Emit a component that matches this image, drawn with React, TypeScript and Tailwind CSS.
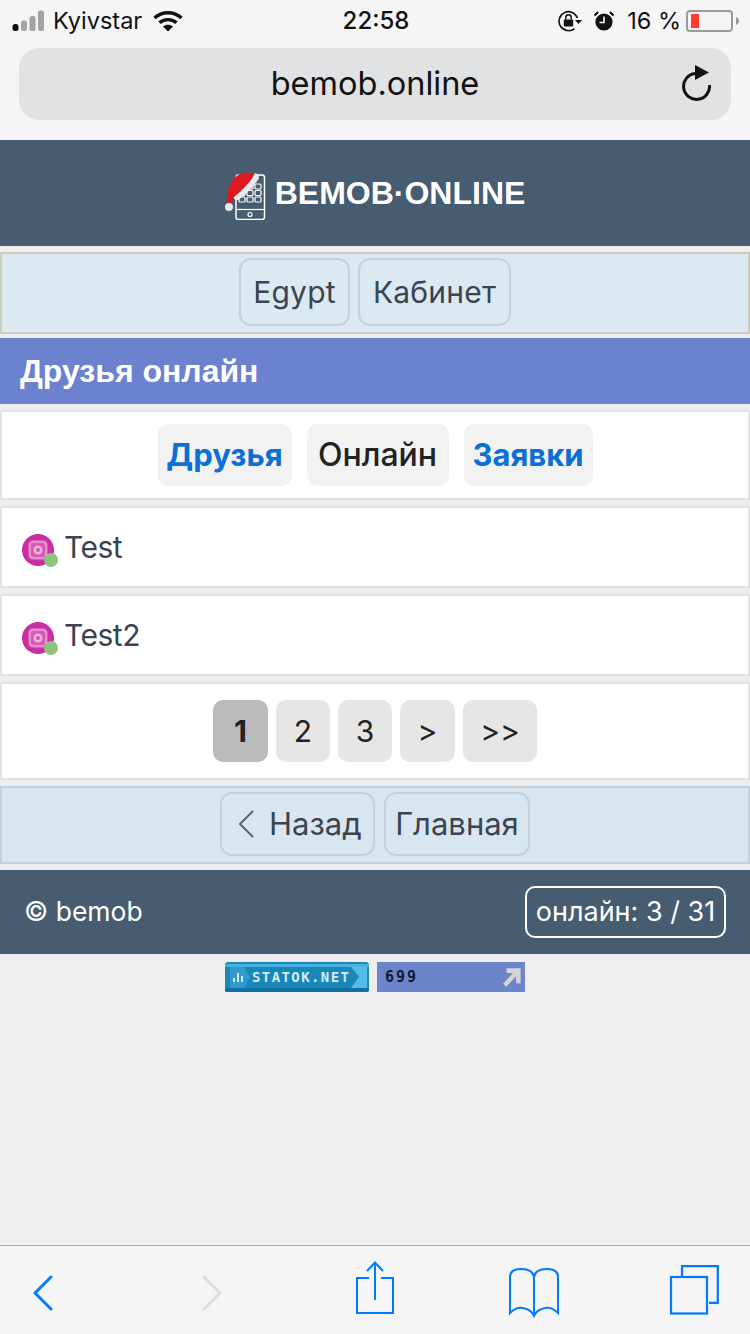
import type { ReactNode } from 'react'

const sans = "font-['Liberation_Sans',Arial,sans-serif]"
const ios = "font-['Inter','Liberation_Sans',sans-serif]"

function SignalIcon() {
  return (
    <svg width="34" height="22" viewBox="0 0 34 22">
      <rect x="0.5" y="14" width="6" height="7" rx="2.5" fill="#111" />
      <rect x="9" y="10.5" width="6" height="10.5" rx="2.5" fill="#a3a3a3" />
      <rect x="17.5" y="6" width="6" height="15" rx="2.5" fill="#a3a3a3" />
      <rect x="26" y="0.5" width="6" height="20.5" rx="2.5" fill="#a3a3a3" />
    </svg>
  )
}

function WifiIcon() {
  return (
    <svg width="30" height="22" viewBox="0 0 30 22" fill="none" stroke="#111" strokeWidth="3.4">
      <path d="M1.5 8 C9 1 21 1 28.5 8" />
      <path d="M6.5 12.8 C11 8.6 19 8.6 23.5 12.8" />
      <path d="M15 21.5 L10 16.4 C13 14.2 17 14.2 20 16.4 Z" fill="#111" stroke="none" />
    </svg>
  )
}

function RotationLockIcon() {
  return (
    <svg width="24" height="22" viewBox="0 0 24 22" fill="none">
      <path d="M19.5 8 A9.5 9.5 0 1 0 16.5 18.6" stroke="#111" strokeWidth="1.6" />
      <path d="M17 10 H24 L20.5 14 Z" fill="#111" />
      <rect x="5.8" y="9.5" width="9.4" height="7" rx="1" fill="#111" />
      <path d="M7.8 9.5 V7.5 A2.7 2.7 0 0 1 13.2 7.5 V9.5" stroke="#111" strokeWidth="1.5" />
    </svg>
  )
}

function AlarmIcon() {
  return (
    <svg width="20" height="20" viewBox="0 0 20 20">
      <circle cx="10" cy="11" r="8.6" fill="#111" />
      <path d="M10 5.5 V11.5 H5.5" stroke="#f5f5f5" strokeWidth="1.6" fill="none" />
      <path d="M0.5 4.5 L4 1 M19.5 4.5 L16 1" stroke="#111" strokeWidth="2.2" />
    </svg>
  )
}

function BatteryIcon() {
  return (
    <div className="flex items-center gap-[3px]">
      <div className="flex h-[22px] w-[47px] items-center rounded-[4px] border-2 border-[#9a9a9a] pl-[3px]">
        <div className="h-[14px] w-[8px] bg-[#ff3b30]" />
      </div>
      <svg width="3" height="8" viewBox="0 0 3 8">
        <path d="M0 0 C2 1 3 2.5 3 4 C3 5.5 2 7 0 8 Z" fill="#9a9a9a" />
      </svg>
    </div>
  )
}

function ReloadIcon() {
  return (
    <svg width="32" height="36" viewBox="0 0 32 36" fill="none">
      <path d="M14 8.5 A13 13 0 1 0 28.5 20" stroke="#111" strokeWidth="3" />
      <path d="M14 0 L28 7.5 L14 15 Z" fill="#111" />
    </svg>
  )
}

// santa hat over a small phone outline
function LogoIcon() {
  return (
    <svg width="42" height="50" viewBox="0 0 42 50" fill="none">
      <rect x="12" y="5" width="28.5" height="44.5" rx="2.5" stroke="#fff" strokeWidth="1.5" />
      <path d="M12 39.5 H40" stroke="#fff" strokeWidth="1.2" />
      <circle cx="26" cy="44.5" r="2" stroke="#fff" strokeWidth="1.2" />
      {[14, 20.5, 27].map(y =>
        [15, 23, 31].map(x => (
          <rect key={`${x}-${y}`} x={x} y={y} width="6" height="5" rx="1" stroke="#fff" strokeWidth="1.2" />
        ))
      )}
      <path d="M4 36 C2 24 5 11 14 5 C20 2 27 2 33 4 L14 24 C10 26 8 30 7 36 Z" fill="#dc1a1f" />
      <path d="M10 27 C18 21 27 12 31 3 C35 4 36 7 34 10 C29 17 22 24 15 29.5 C12 31 9 29 10 27 Z" fill="#e9ecec" />
      <circle cx="5" cy="37" r="4" fill="#e9ecec" />
    </svg>
  )
}

function Avatar() {
  return (
    <div className="relative h-[32px] w-[32px] shrink-0">
      <svg width="32" height="32" viewBox="0 0 32 32" fill="none">
        <circle cx="16" cy="16" r="16" fill="#c92fa3" />
        <rect x="6.5" y="6.5" width="19" height="19" rx="4.5" fill="#e58ccd" />
        <rect x="9" y="9" width="14" height="14" rx="3" fill="#d55ab8" />
        <circle cx="16" cy="16" r="4.5" fill="#eeb4dd" />
        <circle cx="16" cy="16" r="2" fill="#d354b4" />
      </svg>
      <div className="absolute left-[22px] top-[19px] h-[14px] w-[14px] rounded-full bg-[#8cc47c] blur-[0.5px]" />
    </div>
  )
}

function NavButton({ children, className = 'px-[12px]' }: { children: ReactNode; className?: string }) {
  return (
    <div className={`flex items-center justify-center rounded-[12px] border-2 border-[#c2d1dc] text-[#3b4350] ${className}`}>
      {children}
    </div>
  )
}

function PageButton({ label, width, active }: { label: string; width: string; active?: boolean }) {
  return (
    <div
      className={`flex h-[62px] items-center justify-center rounded-[10px] text-[30px] text-[#222] ${width} ${
        active ? 'bg-[#bbbbbb] font-bold' : 'bg-[#e6e6e6]'
      }`}
    >
      {label}
    </div>
  )
}

function FriendRow({ name }: { name: string }) {
  return (
    <div className="flex h-[82px] items-center gap-[10px] border-2 border-[#e2e2e2] bg-white pl-[20px] text-[30px] text-[#3b4350]">
      <div className="mt-[6px]">
        <Avatar />
      </div>
      <span className={`tracking-[-0.5px] ${ios}`}>{name}</span>
    </div>
  )
}

function BackIcon() {
  return (
    <svg width="20" height="36" viewBox="0 0 20 36" fill="none" stroke="#007aff" strokeWidth="3" strokeLinecap="round" strokeLinejoin="round">
      <path d="M18 2 L2 18 L18 34" />
    </svg>
  )
}

function ForwardIcon() {
  return (
    <svg width="20" height="36" viewBox="0 0 20 36" fill="none" stroke="#dcdcdc" strokeWidth="3" strokeLinecap="round" strokeLinejoin="round">
      <path d="M2 2 L18 18 L2 34" />
    </svg>
  )
}

function ShareIcon() {
  return (
    <svg width="38" height="54" viewBox="0 0 38 54" fill="none" stroke="#007aff" strokeWidth="2">
      <path d="M13 17 H1 V52 H37 V17 H25" />
      <path d="M19 39 V2" />
      <path d="M11 10 L19 1.5 L27 10" />
    </svg>
  )
}

function BookIcon() {
  return (
    <svg width="50" height="50" viewBox="0 0 50 50" fill="none" stroke="#007aff" strokeWidth="2">
      <path d="M25 9 C24 3 18 1 12 1 C5 1 1 4 1 9 V45 C6 40 10 39 14 40 C19 41 23 43 25 48 C27 43 31 41 36 40 C40 39 44 40 49 45 V9 C49 4 45 1 38 1 C32 1 26 3 25 9 V47" />
    </svg>
  )
}

function TabsIcon() {
  return (
    <svg width="50" height="50" viewBox="0 0 50 50" fill="none" stroke="#007aff" strokeWidth="2.2">
      <rect x="2" y="12" width="36" height="36.5" />
      <path d="M13 11 V1.2 H48.8 V37.8 H40" />
    </svg>
  )
}

// pixel style counter logo
function StatokBadge() {
  return (
    <svg width="144" height="30" viewBox="0 0 144 30">
      <rect width="144" height="30" rx="3" fill="#1b86b8" />
      <rect y="2" width="144" height="3" fill="#46b2de" />
      <rect y="26" width="144" height="4" rx="2" fill="#10709f" />
      <path d="M5 5 H19 L25 15 L19 26 H5 Z" fill="#2f9acb" />
      <path d="M126 5 H142 V26 H126 L134 15 Z" fill="#56bce6" />
      <path d="M8 20 V16 H10 V20 Z M12 20 V11 H14 V20 Z M16 20 V14 H18 V20 Z" fill="#cfeaf5" />
      <text x="27" y="20" fontFamily="DejaVu Sans Mono, monospace" fontSize="14" fontWeight="700" letterSpacing="1.4" fill="#d3edf7">
        STATOK.NET
      </text>
    </svg>
  )
}

export default function App() {
  return (
    <div className={`flex min-h-[1334px] flex-col bg-[#eeeeee] ${sans}`}>
      {/* browser chrome */}
      <div className={`h-[140px] bg-[#f5f5f5] ${ios}`}>
        <div className="grid h-[48px] grid-cols-3 items-center pb-[6px] text-[23.5px] text-[#111]">
          <div className="flex items-center pl-[12px]">
            <SignalIcon />
            <span className="ml-[7px] mr-[11px]">Kyivstar</span>
            <WifiIcon />
          </div>
          <div className="pl-[2px] text-center text-[24px] font-medium">22:58</div>
          <div className="flex items-center justify-end pr-[11px]">
            <RotationLockIcon />
            <div className="ml-[12px] mr-[13px]">
              <AlarmIcon />
            </div>
            <span className="mr-[5px]">16 %</span>
            <BatteryIcon />
          </div>
        </div>
        <div className="relative mx-[19px] flex h-[72px] items-center justify-center rounded-[20px] bg-[#e1e2e4] text-[32.5px] text-[#111]">
          bemob.online
          <div className="absolute right-[18px] top-[17px]">
            <ReloadIcon />
          </div>
        </div>
      </div>

      {/* site header */}
      <div className="flex h-[106px] items-center justify-center bg-[#475c70] pt-[4px] text-[32px] font-bold text-white">
        <LogoIcon />
        <span className="ml-[9px] mr-[1px] mt-[-4px]">BEMOB·ONLINE</span>
      </div>

      <div className={`mt-[6px] flex h-[82px] justify-center gap-[8px] border-2 border-[#c9ccbe] bg-[#dce9f1] pb-[6px] pt-[4px] text-[30px] tracking-[0.2px] ${ios}`}>
        <NavButton className="w-[111px]">Egypt</NavButton>
        <NavButton className="w-[153px]">Кабинет</NavButton>
      </div>

      <div className="mt-[4px] flex h-[66px] items-center bg-[#6c82cf] pl-[20px] text-[32px] font-bold text-white">
        Друзья онлайн
      </div>

      <div className={`mt-[6px] flex h-[90px] items-center justify-center gap-[15px] border-2 border-[#e2e2e2] bg-white text-[31px] font-bold ${ios}`}>
        <div className="flex h-[62px] w-[134px] items-center justify-center rounded-[10px] bg-[#f2f2f2] text-[#0a6fd6]">Друзья</div>
        <div className="flex h-[62px] w-[142px] items-center justify-center rounded-[10px] bg-[#f2f2f2] text-[32px] font-medium text-[#222]">Онлайн</div>
        <div className="flex h-[62px] w-[129px] items-center justify-center rounded-[10px] bg-[#f2f2f2] text-[#0a6fd6]">Заявки</div>
      </div>

      <div className="mt-[6px] flex flex-col gap-[6px]">
        <FriendRow name="Test" />
        <FriendRow name="Test2" />
      </div>

      <div className={`mt-[6px] flex h-[98px] items-center justify-center gap-[8px] border-2 border-[#e2e2e2] bg-white ${ios}`}>
        <PageButton label="1" width="w-[55px]" active />
        <PageButton label="2" width="w-[54px]" />
        <PageButton label="3" width="w-[54px]" />
        <PageButton label=">" width="w-[55px]" />
        <PageButton label=">>" width="w-[74px]" />
      </div>

      <div className={`mt-[6px] flex h-[78px] justify-center gap-[9px] border-2 border-[#c2d1dc] bg-[#d9e6f0] pb-[6px] pt-[4px] text-[31px] ${ios}`}>
        <NavButton className="w-[155px] !justify-start pl-[16px]">
          <svg className="mr-[15px]" width="16" height="30" viewBox="0 0 16 30" fill="none" stroke="#5b6470" strokeWidth="2">
            <path d="M15 2 L2 15 L15 28" />
          </svg>
          Назад
        </NavButton>
        <NavButton className="w-[146px]">Главная</NavButton>
      </div>

      {/* footer */}
      <div className={`mt-[6px] flex h-[84px] items-center justify-between bg-[#475c70] pl-[24px] pr-[24px] text-white ${ios}`}>
        <span className="text-[26.5px]">© bemob</span>
        <div className="flex h-[52px] w-[201px] items-center justify-center rounded-[10px] border-2 border-white text-[27px]">
          онлайн: 3 / 31
        </div>
      </div>

      {/* counters */}
      <div className="mt-[8px] flex justify-center gap-[8px]">
        <StatokBadge />
        <div className="flex h-[30px] w-[148px] items-center justify-between bg-[#6c84c9] pl-[8px] pr-[3px] font-['DejaVu_Sans_Mono',monospace] text-[15px] font-bold tracking-[2px] text-[#111a33]">
          699
          <svg width="20" height="22" viewBox="0 0 22 22" fill="none" stroke="#d5d5d5" strokeWidth="5">
            <path d="M3 20 L17 5" />
            <path d="M5 4 H18 V18" />
          </svg>
        </div>
      </div>

      {/* safari toolbar */}
      <div className="mt-auto flex h-[89px] items-start border-t border-[#a9a9a9] bg-[#f5f5f5]">
        <div className="ml-[33px] mt-[29px]"><BackIcon /></div>
        <div className="ml-[149px] mt-[29px]"><ForwardIcon /></div>
        <div className="ml-[134px] mt-[15px]"><ShareIcon /></div>
        <div className="ml-[115px] mt-[22px]"><BookIcon /></div>
        <div className="ml-[110px] mt-[19px]"><TabsIcon /></div>
      </div>
    </div>
  )
}
